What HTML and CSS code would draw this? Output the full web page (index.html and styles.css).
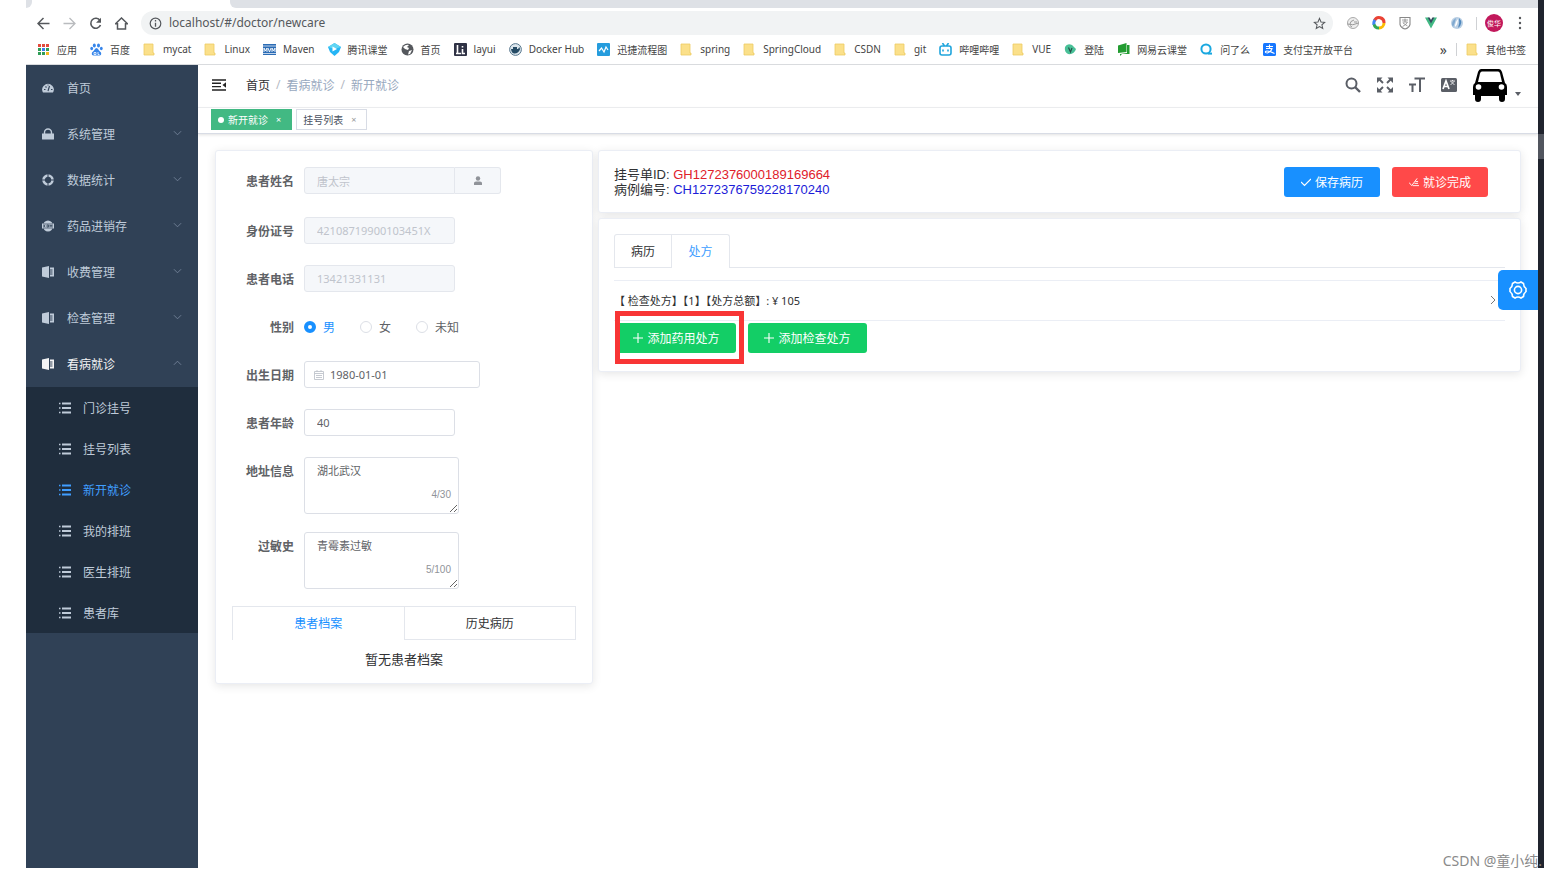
FILE: index.html
```html
<!DOCTYPE html>
<html lang="zh-CN">
<head>
<meta charset="utf-8">
<title>新开就诊</title>
<link rel="stylesheet" href="styles.css">
</head>
<body>
<svg class="sprite" aria-hidden="true">
  <symbol id="folder" viewBox="0 0 13 13"><path d="M1 1h9v9h1v2H1z" fill="#fbe08a" stroke="#edcb62" stroke-width=".8"/></symbol>
  <symbol id="down" viewBox="0 0 10 6"><path d="M1 1l4 4 4-4" fill="none" stroke="currentColor"/></symbol>
  <symbol id="book" viewBox="0 0 12 12"><path d="M0 1.600L7 0v12l-7-1.400zM8 1.500h4v9H8z" fill="currentColor"/><path d="M8 4h2.500M8 6h2.500M8 8h2.500" fill="none" stroke="#304156"/></symbol>
  <symbol id="list" viewBox="0 0 12 12"><path d="M3 1.500h9M3 6h9M3 10.500h9" stroke="currentColor" stroke-width="2"/><path d="M0 1.500h1.500M0 6h1.500M0 10.500h1.500" stroke="currentColor" stroke-width="1.300"/></symbol>
  <symbol id="plus" viewBox="0 0 10 10"><path d="M5 0v10M0 5h10" stroke="currentColor" stroke-width="1.100"/></symbol>
</svg>
<div class="screen">
<div class="browser">
  <header class="chrome">
    <div class="tab-strip"><span class="tab-left"></span><span class="tab-active"></span><span class="tab-rest"></span></div>
    <div class="toolbar">
      <button class="tool" aria-label="后退"><svg viewBox="0 0 13 13"><path d="M12.500 6.500H1M6.500 1L1 6.500 6.500 12" fill="none" stroke="#55585c" stroke-width="1.500"/></svg></button>
      <button class="tool" aria-label="前进"><svg viewBox="0 0 13 13"><path d="M.5 6.500H12M6.500 1L12 6.500 6.500 12" fill="none" stroke="#b9bbbe" stroke-width="1.300"/></svg></button>
      <button class="tool" aria-label="刷新"><svg viewBox="0 0 13 13"><path d="M11 3.500A5 5 0 1 0 11.500 8" fill="none" stroke="#55585c" stroke-width="1.600"/><path d="M12 .8v5H7z" fill="#55585c"/></svg></button>
      <button class="tool" aria-label="主页"><svg viewBox="0 0 13 13"><path d="M.5 6.800L6.500 1l6 5.800H10.500V12h-8V6.800z" fill="none" stroke="#55585c" stroke-width="1.500"/></svg></button>
      <div class="address">
        <svg viewBox="0 0 13 13"><circle cx="6.500" cy="6.500" r="5.300" fill="none" stroke="#55585c" stroke-width="1.200"/><path d="M6.500 5.700v4M6.500 3v1.400" stroke="#55585c" stroke-width="1.300"/></svg>
        <input class="url" type="text" aria-label="地址" value="localhost/#/doctor/newcare">
        <svg viewBox="0 0 14 14"><path d="M7 1.500l1.600 3.800 4 .4-3 2.700.9 4L7 10.300l-3.500 2.100.9-4-3-2.700 4-.4z" fill="none" stroke="#55585c" stroke-width="1.100"/></svg>
      </div>
      <div class="extensions">
        <svg viewBox="0 0 14 14"><circle cx="7" cy="7" r="5.500" fill="#eee" stroke="#aaa"/><path d="M1.500 8q5 2 11-1M4 8q0-3 4-4M4 9.500l2 1.500M8 6h3" fill="none" stroke="#999"/></svg>
        <svg viewBox="0 0 14 14" fill="none" stroke-width="3"><path d="M2.500 4.500A5 5 0 0 1 12 7" stroke="#ea4335"/><path d="M12 7A5 5 0 0 1 7 12" stroke="#fbbc05"/><path d="M7 12A5 5 0 0 1 2 8" stroke="#34a853"/><path d="M2 8.500A5 5 0 0 1 3 4" stroke="#4285f4"/></svg>
        <svg viewBox="0 0 14 14"><path d="M2 1.500h10v7Q11 12 7 13 3 12 2 8.500z" fill="none" stroke="#888" stroke-width="1.100"/><path d="M4 4h6M7 2.500V6M4.500 6h5Q8 9 4.500 10.500M5 7l4.500 3" fill="none" stroke="#888" stroke-width=".8"/></svg>
        <svg viewBox="0 0 14 14"><path d="M1 1.500h3.500L7 6l2.500-4.500H13L7 12.500z" fill="#41b883"/><path d="M3.700 1.500h2L7 4l1.300-2.500h2L7 7.500z" fill="#35495e"/></svg>
        <svg viewBox="0 0 14 14"><circle cx="7" cy="7" r="6" fill="#b9cfe4"/><path d="M3 11q-3-5 3-9-1 5-3 9" fill="#7fa9d0"/><path d="M9 2q5 5-1 10 2-5 1-10" fill="#4f88bd"/><path d="M8 3q-3 3-3 8 3-3 3-8" fill="#fff"/></svg>
        <span class="rule"></span>
        <button class="avatar">俊华</button>
        <svg viewBox="0 0 14 14" fill="#55585c"><circle cx="7" cy="2" r="1.200"/><circle cx="7" cy="7" r="1.200"/><circle cx="7" cy="12" r="1.200"/></svg>
      </div>
    </div>
    <nav class="bookmarks">
      <a href="#"><svg viewBox="0 0 13 13"><path d="M1 2.500h11" stroke="#e34a3d" stroke-width="3" stroke-dasharray="3 1"/><path d="M1 6.500h3M9 6.500h3" stroke="#2f9e57" stroke-width="3"/><path d="M5 6.500h3" stroke="#3b7ded" stroke-width="3"/><path d="M1 10.500h7" stroke="#2f9e57" stroke-width="3" stroke-dasharray="3 1"/><path d="M9 10.500h3" stroke="#f5b91f" stroke-width="3"/></svg>应用</a>
      <a href="#"><svg viewBox="0 0 13 13" fill="#3685ea"><ellipse cx="4.300" cy="2.500" rx="1.500" ry="2"/><ellipse cx="8.500" cy="2.500" rx="1.500" ry="2"/><ellipse cx="1.700" cy="5.500" rx="1.400" ry="1.800"/><ellipse cx="11.300" cy="5.500" rx="1.400" ry="1.800"/><path d="M6.500 5Q8 5 9 7.500l2 2Q12 13 8.500 12.500h-4Q1 13 2 9.500l2-2Q5 5 6.500 5"/><path d="M4 9.500h2v2H4zM8 9v2.500h1.500" fill="none" stroke="#fff" stroke-width=".8"/></svg>百度</a>
      <a href="#"><svg><use href="#folder"/></svg>mycat</a>
      <a href="#"><svg><use href="#folder"/></svg>Linux</a>
      <a href="#"><svg viewBox="0 0 13 13"><path d="M0 1h13v11H0z" fill="#2b6cb5"/><path d="M0 3h13M0 10.500h13" stroke="#fff" stroke-width=".7"/><path d="M1 9V5l1.500 3L4 5v4M5 5l1.500 4L8 5M9 9V5l1.500 3L12 5v4" fill="none" stroke="#fff" stroke-width=".9"/></svg>Maven</a>
      <a href="#"><svg viewBox="0 0 13 13"><path d="M6.500 0L13 4 11 9l-4.500 4L2 9 0 4z" fill="#25b5f5"/><path d="M6.500 0L13 4 6.500 6 0 4z" fill="#60d5f3"/><path d="M4.500 3.500L9 6 4.500 8.500z" fill="#fff"/></svg>腾讯课堂</a>
      <a href="#"><svg viewBox="0 0 13 13"><circle cx="6.500" cy="6.500" r="6" fill="#55585d"/><path d="M2 4Q5 1 8 2L6 4l2 1-1 2-3-1zM8 8l3-1-2 4-2 .5z" fill="#fff"/></svg>首页</a>
      <a href="#"><svg viewBox="0 0 13 13"><rect width="13" height="13" rx="1" fill="#2f3245"/><path d="M3.500 2v8M2 10.500h5M8.500 6v4.500H11M8.500 3v1.500" stroke="#fff" stroke-width="1.600" fill="none"/></svg>layui</a>
      <a href="#"><svg viewBox="0 0 13 13"><circle cx="6.500" cy="6.500" r="5.900" fill="#dce6ed" stroke="#59788e"/><path d="M2 6h7l1.500-2 .5 2.500Q9 11 5 10.500 2.500 10 2 6M4 4h4v2H4z" fill="#264b65"/></svg>Docker Hub</a>
      <a href="#"><svg viewBox="0 0 13 13"><rect width="13" height="13" rx="1" fill="#259cdd"/><path d="M2 8l2.500-3L7 9l2-5 2 3" fill="none" stroke="#fff" stroke-width="1.200"/></svg>迅捷流程图</a>
      <a href="#"><svg><use href="#folder"/></svg>spring</a>
      <a href="#"><svg><use href="#folder"/></svg>SpringCloud</a>
      <a href="#"><svg><use href="#folder"/></svg>CSDN</a>
      <a href="#"><svg><use href="#folder"/></svg>git</a>
      <a href="#"><svg viewBox="0 0 13 13" fill="none" stroke="#20a5dc" stroke-width="1.600"><rect x="1" y="3" width="11" height="9" rx="2"/><path d="M3.500 0l2 3M9.500 0l-2 3M4 6.500v2M9 6.500v2"/></svg>哔哩哔哩</a>
      <a href="#"><svg><use href="#folder"/></svg>VUE</a>
      <a href="#"><svg viewBox="0 0 13 13"><path d="M1 4Q3 0 8 2l4 4q-2 6-8 5Q0 9 1 4" fill="#48c097"/><path d="M4.500 4.500L6.500 9l1.500-4" fill="none" stroke="#264d48" stroke-width="1.200"/></svg>登陆</a>
      <a href="#"><svg viewBox="0 0 13 13" fill="#239c31"><path d="M1 2.500L9.500 0v9L1 10zM10 2h2.500v9H5l-2 2v-2l7-1z"/></svg>网易云课堂</a>
      <a href="#"><svg viewBox="0 0 13 13" fill="none" stroke="#1aa8e0" stroke-width="2"><circle cx="6" cy="6" r="4.600"/><path d="M8 10.600h4"/></svg>问了么</a>
      <a href="#"><svg viewBox="0 0 13 13"><rect width="13" height="13" rx="1.500" fill="#1677ff"/><path d="M3 3.500h7M6.500 1.500v4M3 5.500h6Q8 9 4.500 10 2 10 2.500 8.500 4 7 11.500 10.500" fill="none" stroke="#fff" stroke-width="1.100"/></svg>支付宝开放平台</a>
      <span class="more">»</span><span class="rule"></span>
      <a href="#" class="other"><svg><use href="#folder"/></svg>其他书签</a>
    </nav>
  </header>
  <div class="app">
    <aside class="sidebar">
      <a href="#"><svg viewBox="0 0 12 12"><path d="M1 10.500Q-1 7 1.500 4 6-.5 10.500 4 13 7 11 10.500z" fill="currentColor"/><path d="M6 9L7.500 4M2 7.500h1.500M3.500 4.500l1 1M9 7.500h1.500M5.500 3h1" stroke="#304156" stroke-width="1.100"/></svg>首页</a>
      <a href="#"><svg viewBox="0 0 12 12"><path d="M0 5.500h12V11q0 .5-.5.5H.5Q0 11.500 0 11z" fill="currentColor"/><path d="M2.500 6V4.500a3.500 3.500 0 0 1 7 0V6" fill="none" stroke="currentColor" stroke-width="1.400"/></svg>系统管理<svg class="chevron"><use href="#down"/></svg></a>
      <a href="#"><svg viewBox="0 0 12 12"><circle cx="6" cy="6" r="4.500" fill="none" stroke="currentColor" stroke-width="2.600"/><path d="M6 0v3M6 9v3M0 6h3M9 6h3" stroke="#304156" stroke-width="1"/></svg>数据统计<svg class="chevron"><use href="#down"/></svg></a>
      <a href="#"><svg viewBox="0 0 12 12"><ellipse cx="6" cy="6" rx="5" ry="5.600" fill="currentColor"/><path d="M0 3.500h12v5H0z" fill="currentColor"/><path d="M1 4h10M1 8h10" stroke="#304156" stroke-width=".7"/><path d="M1.500 5l1.500 2M3 5L1.500 7M5 5h1.500v2H5zM8 7V5l1 1.500L10 5v2" fill="none" stroke="#304156" stroke-width=".8"/></svg>药品进销存<svg class="chevron"><use href="#down"/></svg></a>
      <a href="#"><svg><use href="#book"/></svg>收费管理<svg class="chevron"><use href="#down"/></svg></a>
      <a href="#"><svg><use href="#book"/></svg>检查管理<svg class="chevron"><use href="#down"/></svg></a>
      <a href="#" class="open"><svg><use href="#book"/></svg>看病就诊<svg class="chevron"><use href="#down"/></svg></a>
      <div class="submenu">
        <a href="#"><svg><use href="#list"/></svg>门诊挂号</a>
        <a href="#"><svg><use href="#list"/></svg>挂号列表</a>
        <a href="#" class="current"><svg><use href="#list"/></svg>新开就诊</a>
        <a href="#"><svg><use href="#list"/></svg>我的排班</a>
        <a href="#"><svg><use href="#list"/></svg>医生排班</a>
        <a href="#"><svg><use href="#list"/></svg>患者库</a>
      </div>
    </aside>
    <main class="main">
      <div class="navbar">
        <button class="burger" aria-label="收起菜单"><svg viewBox="0 0 14 12"><path d="M0 1h14M0 4.300h9M0 7.600h9M0 11h14" stroke="#222" stroke-width="1.400"/><path d="M14 3.300v5.400L10.500 6z" fill="#222"/></svg></button>
        <nav class="crumbs"><a href="#">首页</a><i>/</i><span>看病就诊</span><i>/</i><span>新开就诊</span></nav>
        <div class="actions">
          <button aria-label="搜索"><svg viewBox="0 0 16 16" fill="none" stroke="#5a5e66"><circle cx="6.500" cy="6.500" r="5" stroke-width="2"/><path d="M10 10l5 5" stroke-width="2.400"/></svg></button>
          <button aria-label="全屏"><svg viewBox="0 0 16 16" fill="#5a5e66" stroke="#5a5e66"><path d="M2 2l4 4M14 2l-4 4M2 14l4-4M14 14l-4-4" stroke-width="1.900"/><path d="M0 .5h5.500L0 6zM16 .5V6L10.500.5zM0 15.500V10l5.500 5.500zM16 15.500h-5.500L16 10z" stroke="none"/></svg></button>
          <button aria-label="字号"><svg viewBox="0 0 16 16" fill="none" stroke="#5a5e66" stroke-width="2"><path d="M5.500 1.500H16M11 1.500V15M0 7.500h7M3.500 7.500V15"/></svg></button>
          <button aria-label="语言"><svg viewBox="0 0 16 16"><rect y="1" width="16" height="14" rx="1.500" fill="#5a5e66"/><path d="M2 12l3-8 3 8M3 9.500h4" fill="none" stroke="#fff" stroke-width="1.700"/><path d="M9 4h5M11.500 3v1M10 4.500L13.500 8M13 4.500L9.500 8" fill="none" stroke="#fff" stroke-width=".8"/></svg></button>
          <button class="user" aria-label="用户"><svg class="car" viewBox="0 0 34 34"><path d="M8 1h18q2 0 3 3l3 11q2 1 2 4v8h-2v4q0 3-3 3t-3-3v-3H8v3q0 3-3 3t-3-3v-4H0v-8q0-3 2-4L5 4q1-3 3-3z"/><path d="M9 3.500h16q1.500 0 2 2L29 14H5l2-8.500q.5-2 2-2z" fill="#fff"/><circle cx="5.500" cy="19" r="2.800" fill="#fff"/><circle cx="28.500" cy="19" r="2.800" fill="#fff"/></svg><svg class="caret" viewBox="0 0 6 4"><path d="M0 0h6L3 4z" fill="#5a5e66"/></svg></button>
        </div>
      </div>
      <div class="tags"><a href="#" class="tag on"><b></b>新开就诊<i>×</i></a><a href="#" class="tag">挂号列表<i>×</i></a></div>
      <div class="content">
        <form class="card patient">
          <div class="row name-row"><label for="name">患者姓名</label><div class="group"><input id="name" value="唐太宗" disabled><button type="button" aria-label="选择患者"><svg viewBox="0 0 10 10" fill="#909399"><circle cx="5" cy="2.500" r="2.200"/><path d="M1 9V7q0-1.500 2-1.500h4q2 0 2 1.500v2z"/></svg></button></div></div>
          <div class="row"><label for="card">身份证号</label><input id="card" value="42108719900103451X" disabled></div>
          <div class="row"><label for="phone">患者电话</label><input id="phone" value="13421331131" disabled></div>
          <div class="row"><span class="label">性别</span><div class="radios"><label><input type="radio" name="sex" checked>男</label><label><input type="radio" name="sex">女</label><label><input type="radio" name="sex">未知</label></div></div>
          <div class="row"><label for="birth">出生日期</label><div class="date"><svg viewBox="0 0 10 10" fill="none" stroke="#c0c4cc" stroke-width=".9"><path d="M.5 1.500h9v8h-9zM.5 3.500h9M3 0v2M7 0v2M2 5.500h6M2 7.500h6"/></svg><input id="birth" value="1980-01-01"></div></div>
          <div class="row"><label for="age">患者年龄</label><input id="age" value="40"></div>
          <div class="row area-row"><label for="addr">地址信息</label><div class="area"><textarea id="addr">湖北武汉</textarea><span>4/30</span></div></div>
          <div class="row area-row"><label for="allergy">过敏史</label><div class="area"><textarea id="allergy">青霉素过敏</textarea><span>5/100</span></div></div>
          <div class="split"><button type="button" class="on">患者档案</button><button type="button">历史病历</button></div>
          <p class="empty">暂无患者档案</p>
        </form>
        <div class="right">
          <section class="card summary">
            <div class="ids"><div>挂号单ID: <span class="red">GH1272376000189169664</span></div><div>病例编号: <span class="blue">CH1272376759228170240</span></div></div>
            <button class="btn primary"><svg viewBox="0 0 10 10"><path d="M0 5l3.500 3.500L10 2" fill="none" stroke="currentColor" stroke-width="1.200"/></svg>保存病历</button>
            <button class="btn danger"><svg viewBox="0 0 11 10"><path d="M0 5.500L3 9l6-8M7 4.500h3M6 6.500h4M4 9h7" fill="none" stroke="currentColor"/></svg>就诊完成</button>
          </section>
          <section class="card orders">
            <div class="tabs"><button>病历</button><button class="on">处方</button></div>
            <button class="fold"><span>【 检查处方】【1】【处方总额】: ¥ 105</span><svg viewBox="0 0 6 10"><path d="M1 1l4 4-4 4" fill="none" stroke="#777"/></svg></button>
            <div class="adds"><div class="marked"><button class="btn success"><svg><use href="#plus"/></svg>添加药用处方</button></div><button class="btn success"><svg><use href="#plus"/></svg>添加检查处方</button></div>
          </section>
        </div>
      </div>
      <button class="settings" aria-label="设置"><svg viewBox="0 0 20 20" fill="none" stroke="#fff" stroke-width="1.600"><path d="M7 2q3 2 6 0l2.500 1.500q0 3 2.500 5v3q-2.500 2-2.500 5L13 18q-3-2-6 0l-2.500-1.500q0-3-2.500-5v-3q2.500-2 2.500-5z"/><circle cx="10" cy="10" r="3.600"/></svg></button>
    </main>
  </div>
</div>
<div class="edge"><span></span></div>
</div>
<div class="credit">CSDN @童小纯.</div>
</body>
</html>
```

FILE: styles.css
```css
* { box-sizing: border-box; }
body { margin: 0; background: #fff; color: #303133; font-family: "Noto Sans", "Noto Sans CJK SC", sans-serif; font-size: 12px; }
button, input, textarea { font: inherit; color: inherit; }
button { border: 0; padding: 0; background: none; }
a { color: inherit; text-decoration: none; }
i { font-style: normal; }
svg { flex: none; display: block; }
.sprite { position: absolute; width: 0; height: 0; }
.screen { display: flex; min-height: 100vh; padding: 0 12px 9px 26px; }
.browser { flex: 1; min-width: 0; display: flex; flex-direction: column; }
.edge { width: 6px; background: #20242e; padding-top: 134px; }
.edge span { display: block; height: 25px; background: #51555e; }

.chrome { border-bottom: 1px solid #d9dbde; }
.tab-strip { display: flex; height: 8px; background: #fff; }
.tab-left { width: 6px; background: #dee1e6; border-radius: 0 0 6px 0; }
.tab-active { width: 198px; }
.tab-rest { flex: 1; background: #dee1e6; border-radius: 0 0 0 6px; }
.toolbar { display: flex; align-items: center; gap: 13px; height: 30px; padding: 0 11px; }
.tool svg { width: 13px; height: 13px; }
.address { flex: 1; display: flex; align-items: center; height: 24px; padding: 0 7px 0 8px; border-radius: 12px; background: #f1f3f4; }
.address svg { width: 13px; height: 13px; }
.url { flex: 1; height: 24px; border: 0; padding: 0 7px 2px; background: none; color: #55585c; font-size: 12px; }
.extensions { display: flex; align-items: center; gap: 12px; }
.extensions svg { width: 14px; height: 14px; }
.rule { width: 1px; height: 13px; background: #cfd1d4; }
.extensions .avatar { width: 18px; height: 18px; margin: 0 -2px 0 -4px; border-radius: 50%; background: #c2185b; color: #fff; font-size: 7px; }
.bookmarks { display: flex; align-items: center; gap: 13px; height: 26px; padding: 0 12px 4px 11px; font-size: 10px; white-space: nowrap; color: #444; }
.bookmarks a { display: flex; align-items: center; gap: 7px; }
.bookmarks svg { width: 13px; height: 13px; }
.more { margin-left: auto; font-size: 14px; }
.bookmarks .rule { margin: 0 -4px; }

.app { flex: 1; display: flex; }
.sidebar { width: 172px; background: #304156; color: #bfcbd9; }
.sidebar a { display: flex; align-items: center; gap: 13px; height: 46px; padding: 0 16px; }
.sidebar svg { width: 12px; height: 12px; }
.sidebar .chevron { width: 9px; height: 6px; margin: 0 0 2px auto; color: #74839a; }
.sidebar .open { color: #f4f4f5; }
.sidebar .open .chevron { transform: rotate(180deg); }
.submenu { background: #1f2d3d; }
.sidebar .submenu a { height: 41px; padding-left: 33px; gap: 12px; }
.submenu .current { color: #409eff; }

.main { position: relative; flex: 1; min-width: 0; }
.navbar { display: flex; align-items: center; height: 43px; padding: 0 17px 3px 14px; border-bottom: 1px solid #f0f1f3; }
.burger svg { width: 14px; height: 12px; }
.crumbs { display: flex; gap: 6px; margin-left: 20px; color: #97a8be; }
.crumbs i { color: #b5bac4; }
.crumbs a { color: #303133; }
.actions { display: flex; align-items: center; gap: 16px; margin-left: auto; }
.actions svg { width: 16px; height: 16px; }
.actions .user { display: flex; align-items: center; gap: 8px; }
.actions .car { width: 34px; height: 34px; }
.actions .caret { width: 6px; height: 4px; margin-top: 18px; }
.tags { display: flex; align-items: center; gap: 4px; height: 26px; padding: 0 13px 2px; border-bottom: 1px solid #d8dce5; box-shadow: 0 1px 3px #0000001f; font-size: 10px; }
.tag { display: flex; align-items: center; height: 21px; padding: 0 10px 0 6px; border: 1px solid #d8dce5; color: #495060; }
.tag i { margin-left: 8px; font-size: 9px; color: #999; }
.tag.on { background: #42b983; border-color: #42b983; color: #fff; }
.tag.on i { color: #fff; }
.tag b { width: 6px; height: 6px; margin-right: 4px; border-radius: 50%; background: #fff; }

.content { display: flex; align-items: flex-start; gap: 5px; padding: 16px 17px; }
.card { background: #fff; border: 1px solid #ebeef5; border-radius: 3px; box-shadow: 0 2px 10px #0000001a; padding: 16px; }
.patient { width: 378px; padding-bottom: 14px; }
.row { display: flex; gap: 10px; margin-bottom: 21px; }
.name-row { margin-bottom: 23px; }
.area-row { margin-bottom: 18px; }
.row > label, .label { width: 62px; padding-top: 1px; line-height: 28px; height: 27px; text-align: right; font-weight: 700; color: #606266; }
.row > input, .group input { width: 151px; height: 27px; padding: 0 12px; border: 1px solid #dcdfe6; border-radius: 3px; font-size: 11px; color: #606266; background: #fff; }
.row input:disabled { background: #f5f7fa; border-color: #e4e7ed; color: #c0c4cc; }
.group { display: flex; width: 197px; }
.group input { border-radius: 3px 0 0 3px; }
.group button { flex: 1; display: flex; align-items: center; justify-content: center; background: #f5f7fa; border: 1px solid #e4e7ed; border-left: 0; border-radius: 0 3px 3px 0; }
.group svg { width: 10px; height: 10px; }
.radios { display: flex; align-items: center; gap: 25px; color: #606266; }
.radios label { display: flex; align-items: center; gap: 7px; }
.radios label:has(:checked) { color: #1890ff; }
.radios input { appearance: none; width: 12px; height: 12px; margin: 0; border: 1px solid #dcdfe6; border-radius: 50%; }
.radios input:checked { border: 4px solid #1890ff; }
.date { display: flex; align-items: center; gap: 6px; width: 176px; height: 27px; padding: 0 9px; border: 1px solid #dcdfe6; border-radius: 3px; }
.date svg { width: 10px; height: 10px; }
.date input { flex: 1; min-width: 0; height: 24px; padding: 0; border: 0; font-size: 11px; color: #606266; }
.area { position: relative; width: 155px; height: 57px; }
.area textarea { display: block; width: 100%; height: 57px; padding: 4px 12px; border: 1px solid #dcdfe6; border-radius: 3px; font-size: 11px; line-height: 17px; color: #606266; overflow: hidden; }
.area span { position: absolute; right: 8px; bottom: 11px; font: 10px/16px "Liberation Sans", sans-serif; color: #909399; }
.split { display: flex; border: 1px solid #e4e7ed; border-bottom: 0; margin-top: -1px; }
.split button { flex: 1; height: 33px; border-bottom: 1px solid #e4e7ed; }
.split button + button { border-left: 1px solid #e4e7ed; }
.split .on { border-bottom-color: transparent; color: #1890ff; }
.empty { margin: 10px 0 0; text-align: center; font-size: 13px; line-height: 19px; }

.right { flex: 1; min-width: 0; display: grid; gap: 5px; }
.summary { display: flex; gap: 12px; padding: 16px 32px 15px 15px; height: 63px; }
.ids { flex: 1; font: 13px/15px "Liberation Sans", "Noto Sans CJK SC", sans-serif; }
.red { color: #e0202a; }
.blue { color: #1c1cd8; }
.btn { display: flex; align-items: center; justify-content: center; gap: 4px; min-width: 96px; height: 30px; border-radius: 3px; color: #fff; }
.btn svg { width: 10px; height: 10px; }
.primary { background: #1890ff; }
.danger { background: #ff4949; }
.success { min-width: 119px; background: #13ce66; }
.orders { padding: 15px 15px 18px; }
.tabs { display: flex; border-bottom: 1px solid #e4e7ed; }
.tabs button { width: 58px; height: 33px; border: 1px solid #e4e7ed; border-bottom: 0; border-radius: 3px 0 0 0; }
.tabs .on { border-left: 0; border-radius: 0 3px 0 0; margin-bottom: -1px; height: 34px; padding-bottom: 1px; background: #fff; color: #409eff; }
.fold { display: flex; align-items: center; justify-content: space-between; width: 100%; height: 41px; margin-top: 12px; padding: 0 9px 2px 0; border: 1px solid #ebeef5; border-width: 1px 0; font-size: 11px; }
.fold svg { width: 6px; height: 10px; }
.adds { display: flex; gap: 12px; padding: 2px 0 0 3px; }
.marked { position: relative; }
.marked::after { content: ""; position: absolute; inset: -12px -8px -11px -2px; border: 5px solid #f83535; }
.settings { position: absolute; top: 205px; right: 0; width: 40px; height: 40px; display: flex; align-items: center; justify-content: center; background: #1890ff; border-radius: 5px 0 0 5px; }
.settings svg { width: 20px; height: 20px; }
.credit { position: absolute; right: 14px; bottom: 6px; font-size: 14px; line-height: 20px; color: #8a8a8a; }
```
